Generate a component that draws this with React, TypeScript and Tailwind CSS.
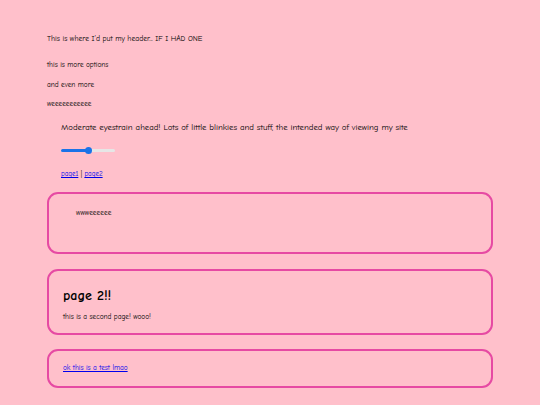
import React from "react";

export default function App() {
  const font = { fontFamily: '"Comic Sans MS", "Comic Neue", "Liberation Sans", sans-serif' };
  return (
    <div className="min-h-[405px] w-[540px] bg-[#ffc0cb] text-black" style={font}>
      <div className="px-[47px] pt-[34px]">
        <p className="text-[7.6px] leading-[10px]">This is where I'd put my header... IF I HAD ONE</p>
        <p className="mt-[16px] text-[7.3px] leading-[10px]">this is more options</p>
        <p className="mt-[10px] text-[7.3px] leading-[10px]">and even more</p>
        <p className="mt-[9px] text-[7.3px] leading-[10px]">weeeeeeeeeee</p>
        <div className="pl-[14px]">
          <p className="mt-[13px] text-[8.75px] leading-[10px]">
            Moderate eyestrain ahead! Lots of little blinkies and stuff, the intended way of viewing my site
          </p>
          <div className="mt-[14px] flex h-[8px] w-[54px] items-center">
            <div className="relative h-[3px] w-full rounded-full bg-[#e6e6e6]">
              <div className="absolute left-0 top-0 h-[3px] w-[28px] rounded-full bg-[#1a73e8]" />
              <div className="absolute left-[24px] top-[-2px] h-[7px] w-[7px] rounded-full bg-[#1a73e8]" />
            </div>
          </div>
          <p className="mt-[15px] text-[7px] leading-[10px]">
            <a href="#" className="text-[#0000ee] underline">page1</a> | <a href="#" className="text-[#0000ee] underline">page2</a>
          </p>
        </div>
        <div className="mt-[13px] h-[62px] rounded-[11px] border-2 border-[#e64aa3] pl-[27px] pt-[14px]">
          <p className="text-[7.4px] leading-[10px]">wwweeeeee</p>
        </div>
        <div className="mt-[15px] h-[66px] rounded-[11px] border-2 border-[#e64aa3] pl-[14px] pt-[15px]">
          <h1 className="text-[14px] font-bold leading-[20px]">page 2!!</h1>
          <p className="mt-[6px] text-[7.3px] leading-[10px]">this is a second page! wooo!</p>
        </div>
        <div className="mt-[14px] h-[39px] rounded-[11px] border-2 border-[#e64aa3] pl-[14px] pt-[12px]">
          <p className="text-[7.3px] leading-[10px]">
            <a href="#" className="text-[#0000ee] underline">ok this is a test lmao</a>
          </p>
        </div>
      </div>
    </div>
  );
}
